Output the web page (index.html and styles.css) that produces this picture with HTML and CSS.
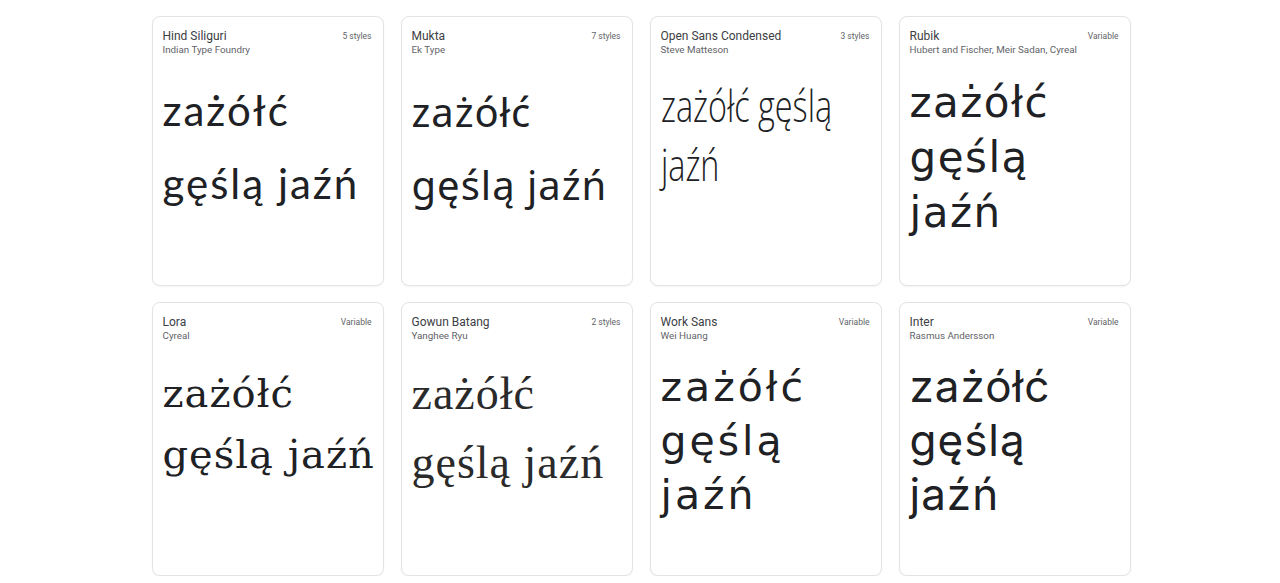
FILE: index.html
```html
<!DOCTYPE html>
<html lang="pl">
<head>
<meta charset="utf-8">
<title>Fonts</title>
<link rel="stylesheet" href="styles.css">
</head>
<body>
<main class="grid">
  <article class="card">
    <header class="head">
      <div class="names"><div class="name">Hind Siliguri</div><div class="author">Indian Type Foundry</div></div>
      <div class="meta">5 styles</div>
    </header>
    <div class="sample s-hind"><span class="ln">zażółć</span><span class="ln">gęślą jaźń</span></div>
  </article>
  <article class="card">
    <header class="head">
      <div class="names"><div class="name">Mukta</div><div class="author">Ek Type</div></div>
      <div class="meta">7 styles</div>
    </header>
    <div class="sample s-mukta"><span class="ln">zażółć</span><span class="ln">gęślą jaźń</span></div>
  </article>
  <article class="card">
    <header class="head">
      <div class="names"><div class="name">Open Sans Condensed</div><div class="author">Steve Matteson</div></div>
      <div class="meta">3 styles</div>
    </header>
    <div class="sample s-cond"><span class="ln">zażółć gęślą</span><span class="ln">jaźń</span></div>
  </article>
  <article class="card">
    <header class="head">
      <div class="names"><div class="name">Rubik</div><div class="author">Hubert and Fischer, Meir Sadan, Cyreal</div></div>
      <div class="meta">Variable</div>
    </header>
    <div class="sample s-rubik"><span class="ln">zażółć</span><span class="ln">gęślą</span><span class="ln">jaźń</span></div>
  </article>
  <article class="card">
    <header class="head">
      <div class="names"><div class="name">Lora</div><div class="author">Cyreal</div></div>
      <div class="meta">Variable</div>
    </header>
    <div class="sample s-lora"><span class="ln">zażółć</span><span class="ln">gęślą jaźń</span></div>
  </article>
  <article class="card">
    <header class="head">
      <div class="names"><div class="name">Gowun Batang</div><div class="author">Yanghee Ryu</div></div>
      <div class="meta">2 styles</div>
    </header>
    <div class="sample s-gowun"><span class="ln">zażółć</span><span class="ln">gęślą jaźń</span></div>
  </article>
  <article class="card">
    <header class="head">
      <div class="names"><div class="name">Work Sans</div><div class="author">Wei Huang</div></div>
      <div class="meta">Variable</div>
    </header>
    <div class="sample s-work"><span class="ln">zażółć</span><span class="ln">gęślą</span><span class="ln">jaźń</span></div>
  </article>
  <article class="card">
    <header class="head">
      <div class="names"><div class="name">Inter</div><div class="author">Rasmus Andersson</div></div>
      <div class="meta">Variable</div>
    </header>
    <div class="sample s-inter"><span class="ln">zażółć</span><span class="ln">gęślą</span><span class="ln">jaźń</span></div>
  </article>
</main>
</body>
</html>
```
FILE: styles.css
```css
* { box-sizing: border-box; }
html, body { margin: 0; padding: 0; background: #fff; }
body { font-family: Roboto, "Liberation Sans", sans-serif; color: #202124; }
.grid {
  display: grid;
  grid-template-columns: repeat(4, 232px);
  grid-template-rows: 270px 274px;
  column-gap: 17px;
  row-gap: 16px;
  width: 979px;
  margin: 16px auto 0;
  padding-left: 1px;
}
.card {
  border: 1px solid #e3e3e3;
  border-radius: 8px;
  box-shadow: 0 1px 2px rgba(60, 64, 67, 0.06);
  padding: 12px 11px 0 10px;
  overflow: hidden;
  background: #fff;
}
.head { display: flex; justify-content: space-between; align-items: flex-start; }
.name { font-size: 12px; line-height: 14px; color: #3c4043; }
.author { font-size: 9.8px; line-height: 13px; color: #5f6368; }
.meta { font-size: 8.5px; line-height: 14px; color: #5f6368; }
.sample { color: #202124; font-size: 40px; }
.ln { display: block; white-space: nowrap; }
.s-hind { font-family: Lato, sans-serif; font-size: 42px; letter-spacing: 2px; line-height: 73px; margin-top: 18px; }
.s-mukta { font-family: "Noto Sans", sans-serif; letter-spacing: 1px; line-height: 73px; margin-top: 19px; }
.s-cond { font-family: "Open Sans", sans-serif; font-weight: 300; font-size: 44px; line-height: 59px; margin-top: 20px; transform: scaleX(0.735); transform-origin: left top; }
.s-rubik { font-family: "DejaVu Sans", sans-serif; font-size: 42px; letter-spacing: 1.5px; line-height: 55px; margin-top: 19px; }
.s-lora { font-family: "DejaVu Serif", serif; letter-spacing: 1px; line-height: 61px; margin-top: 21px; }
.s-gowun { font-family: "Liberation Serif", serif; font-size: 46px; letter-spacing: 1px; line-height: 69px; margin-top: 17px; color: #2a2a2a; }
.s-work { font-family: "DejaVu Sans", sans-serif; font-size: 41px; letter-spacing: 3px; line-height: 54px; margin-top: 18px; }
.s-inter { font-family: Inter, sans-serif; font-size: 44px; letter-spacing: 1px; line-height: 54px; margin-top: 17px; }
```
